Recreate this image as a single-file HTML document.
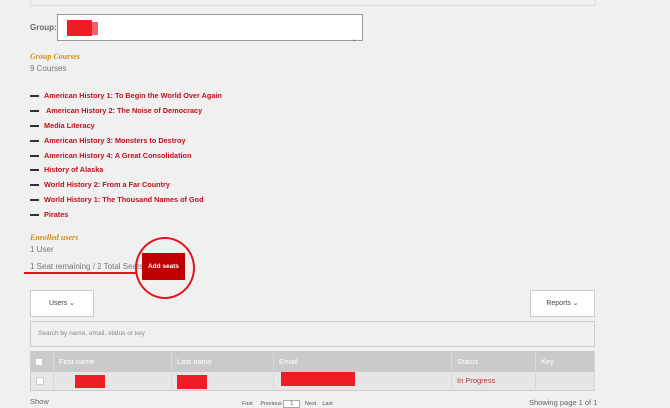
<html><head><style>
body{margin:0;width:670px;height:407px;background:#f0f0f0;font-family:"Liberation Sans",sans-serif;position:relative;overflow:hidden;color:#666}
.a{position:absolute}
.c{position:absolute;left:44px;font-size:7.3px;font-weight:bold;color:#c0101a}
.d{position:absolute;left:30px;width:9px;height:1.5px;background:#333}
.r{position:absolute;background:#ee1c25}
th,td{border-right:1px solid #d8d8d8;text-align:left;font-weight:normal;padding:0 5px;font-size:7.5px}
</style></head><body>
<div class="a" style="left:30px;top:-2px;width:564px;height:6px;border:1px solid #ddd;background:#f0f0f0"></div>
<div class="a" style="left:30px;top:23px;font-size:8px;font-weight:bold;color:#666">Group:</div>
<div class="a" style="left:57px;top:14px;width:304px;height:25px;border:1px solid #999;background:#fff"></div>
<div class="r" style="left:67px;top:20px;width:25px;height:16px"></div><div class="r" style="left:90px;top:22px;width:8px;height:13px;opacity:.7"></div>
<div class="a" style="left:352px;top:36px;font-size:6px;color:#555">⌄</div>
<div class="a" style="left:30px;top:52px;font-size:8px;font-style:italic;font-weight:bold;color:#d0901a;font-family:'Liberation Serif',serif">Group Courses</div>
<div class="a" style="left:30px;top:64px;font-size:8px;color:#777">9 Courses</div>
<div class="d" style="top:95px"></div><div class="c" style="top:91px">American History 1: To Begin the World Over Again</div>
<div class="d" style="top:110px"></div><div class="c" style="top:106px;left:46px">American History 2: The Noise of Democracy</div>
<div class="d" style="top:125px"></div><div class="c" style="top:121px">Media Literacy</div>
<div class="d" style="top:140px"></div><div class="c" style="top:136px">American History 3: Monsters to Destroy</div>
<div class="d" style="top:155px"></div><div class="c" style="top:151px">American History 4: A Great Consolidation</div>
<div class="d" style="top:169px"></div><div class="c" style="top:165px">History of Alaska</div>
<div class="d" style="top:184px"></div><div class="c" style="top:180px">World History 2: From a Far Country</div>
<div class="d" style="top:199px"></div><div class="c" style="top:195px">World History 1: The Thousand Names of God</div>
<div class="d" style="top:214px"></div><div class="c" style="top:210px">Pirates</div>
<div class="a" style="left:30px;top:233px;font-size:8px;font-style:italic;font-weight:bold;color:#d0901a;font-family:'Liberation Serif',serif">Enrolled users</div>
<div class="a" style="left:30px;top:245px;font-size:8px;color:#777">1 User</div>
<div class="a" style="left:30px;top:262px;font-size:8px;color:#777">1 Seat remaining / 2 Total Seats</div>
<div class="a" style="left:24px;top:272px;width:112px;height:2px;background:#e3141e"></div>
<div class="a" style="left:142px;top:253px;width:43px;height:27px;background:#c00000;color:#fff;font-size:6.5px;font-weight:bold;text-align:center;line-height:27px">Add seats</div>
<div class="a" style="left:135px;top:237px;width:56px;height:58px;border:2px solid #e3141e;border-radius:50%"></div>
<div class="a" style="left:30px;top:290px;width:62px;height:25px;border:1px solid #ccc;background:#fff;font-size:7px;color:#444;text-align:center;line-height:25px">Users ⌄</div>
<div class="a" style="left:530px;top:290px;width:63px;height:25px;border:1px solid #ccc;background:#fff;font-size:7px;color:#444;text-align:center;line-height:25px">Reports ⌄</div>
<div class="a" style="left:30px;top:321px;width:563px;height:24px;border:1px solid #ccc;background:#f0f0f0;font-size:6.5px;color:#888;line-height:24px;text-indent:7px">Search by name, email, status or key</div>
<table class="a" style="left:30px;top:351px;width:565px;border-collapse:collapse;border:1px solid #ccc">
<tr style="background:#cacaca;color:#fff;height:20px"><th style="width:12px"><div style="width:6px;height:6px;background:#fff"></div></th><th style="width:107px">First name</th><th style="width:91px">Last name</th><th style="width:167px">Email</th><th style="width:73px">Status</th><th>Key</th></tr>
<tr style="background:#e6e6e6;height:19px"><td><div style="width:6px;height:6px;background:#fff;border:1px solid #ccc"></div></td><td></td><td></td><td></td><td style="color:#c0303a">In Progress</td><td></td></tr>
</table>
<div class="r" style="left:75px;top:375px;width:30px;height:13px"></div>
<div class="r" style="left:177px;top:375px;width:30px;height:14px"></div>
<div class="r" style="left:281px;top:372px;width:74px;height:14px"></div>
<div class="a" style="left:30px;top:397px;font-size:7.5px">Show</div>
<div class="a" style="left:242px;top:401px;font-size:5.5px;color:#555">First &nbsp;&nbsp;&nbsp; Previous <span style="border:1px solid #aaa;background:#fff;padding:0 6px">1</span> &nbsp; Next &nbsp;&nbsp; Last</div>
<div class="a" style="left:529px;top:398px;font-size:7.5px">Showing page 1 of 1</div>
</body></html>
